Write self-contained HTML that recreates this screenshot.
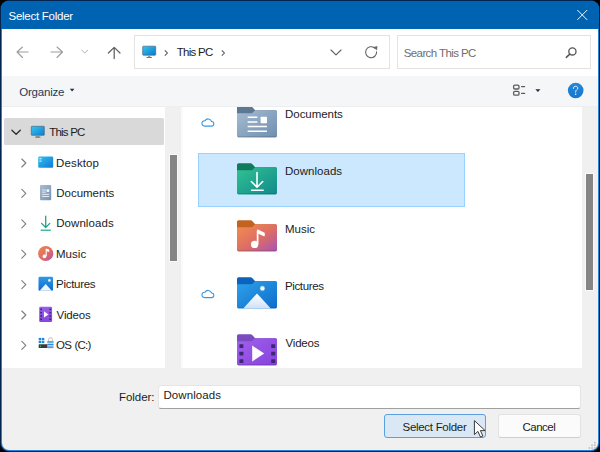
<!DOCTYPE html>
<html><head><meta charset="utf-8">
<style>
*{margin:0;padding:0;box-sizing:border-box}
html,body{width:600px;height:452px;overflow:hidden;background:#000}
body{font-family:"Liberation Sans",sans-serif;position:relative}
.a{position:absolute}
.t{position:absolute;white-space:nowrap;line-height:1;color:#1b1b1b}
#win{left:0;top:0;width:600px;height:452px;background:#022552;border-radius:9px}
#inner{left:1px;top:1px;width:598px;height:450px;background:#2a82d4;border-radius:8px}
#body{left:2px;top:2px;width:596px;height:448px;background:#f0f0f0;border-radius:7px;overflow:hidden}
</style></head>
<body>
<div id="win" class="a"></div>
<div id="inner" class="a"></div>
<div id="body" class="a"></div>
<!-- title bar -->
<div class="a" style="left:1px;top:1px;width:598px;height:28px;background:#0063b1;border-radius:8px 8px 0 0"></div>
<svg class="a" style="left:576px;top:9px" width="12" height="12" viewBox="0 0 12 12"><path d="M1.3 1L11.2 10.9M11.2 1L1.3 10.9" stroke="#fff" stroke-width="0.95" fill="none"/></svg>

<!-- top white nav/address area -->
<div class="a" style="left:2px;top:29px;width:596px;height:47px;background:#fff"></div>
<!-- toolbar -->
<div class="a" style="left:2px;top:76px;width:596px;height:30px;background:#f5f6f7"></div>
<div class="a" style="left:2px;top:106px;width:596px;height:1px;background:#eceef0"></div>
<!-- content white -->
<div class="a" style="left:2px;top:107px;width:596px;height:261px;background:#fff"></div>


<!-- address bar -->
<div class="a" style="left:134px;top:35px;width:256px;height:34px;border:1px solid #e3e3e3;background:#fff"></div>
<div class="a" style="left:397px;top:35px;width:194px;height:34px;border:1px solid #e3e3e3;background:#fff"></div>
<!-- nav arrows -->
<svg class="a" style="left:0;top:29px" width="600" height="47" viewBox="0 29 600 47">
 <g fill="none" stroke-linecap="round" stroke-linejoin="round">
  <path d="M17 52H28M22.5 47L17 52L22.5 57.5" stroke="#9c9c9c" stroke-width="1.1"/>
  <path d="M51 52H62.5M57 47L62.5 52L57 57.5" stroke="#9c9c9c" stroke-width="1.1"/>
  <path d="M81.8 50.2L84.8 53L87.8 50.2" stroke="#b4b4b4" stroke-width="1"/>
  <path d="M114.2 47.6V58.6M108.4 53L114.2 47.4L120 53" stroke="#5f5f5f" stroke-width="1.25"/>
  <path d="M331 50L336 54.8L341 50" stroke="#606060" stroke-width="1.1"/>
  <path d="M374.64 47.99A5.5 5.5 0 1 0 376.58 51.72" stroke="#626262" stroke-width="1.1"/>
  <path d="M377.1 46.6L376.8 49.9L373.8 47.6Z" fill="#626262" stroke="#626262" stroke-width="0.5" stroke-linejoin="round"/>
  <circle cx="572.4" cy="51.4" r="3.6" stroke="#555" stroke-width="1.3"/>
  <path d="M569.8 54.1L566.3 57.4" stroke="#555" stroke-width="1.5"/>
 </g>
</svg>
<!-- monitor icon address -->
<svg class="a" style="left:142px;top:45px" width="16" height="14" viewBox="0 0 16 14">
 <defs><linearGradient id="mon" x1="0" y1="0" x2="1" y2="1"><stop offset="0" stop-color="#35c6ec"/><stop offset="1" stop-color="#0b78cc"/></linearGradient></defs>
 <rect x="0.7" y="1.2" width="13" height="9" rx="0.6" fill="url(#mon)" stroke="#44698a" stroke-width="0.7"/>
 <rect x="6" y="10.6" width="2.4" height="1.5" fill="#9a9a9a"/>
 <rect x="4.4" y="12" width="5.6" height="1.1" rx="0.4" fill="#777"/>
</svg>
<svg class="a" style="left:160px;top:45px" width="70" height="14" viewBox="160 45 70 14">
 <path d="M164.8 50.4L167.4 53L164.8 55.6M221.8 50.4L224.4 53L221.8 55.6" fill="none" stroke="#555" stroke-width="1.05"/>
</svg>

<!-- toolbar -->
<svg class="a" style="left:0;top:76px" width="600" height="30" viewBox="0 76 600 30">
 <path d="M69.8 88.8H74.4L72.1 91.6Z" fill="#1e2a4a"/>
 <g fill="none" stroke="#5c5c5c" stroke-width="1.3" stroke-linecap="round">
  <rect x="513.6" y="85.2" width="5.4" height="3.8" rx="1.2"/>
  <rect x="513.6" y="91.4" width="5.4" height="3.8" rx="1.2"/>
  <path d="M521.6 86.6H524.6M521.6 93.4H524.6"/>
 </g>
 <path d="M535.4 89.2H540.4L537.9 92Z" fill="#1e2a4a"/>
 <defs><linearGradient id="hlp" x1="0" y1="0" x2="0" y2="1"><stop offset="0" stop-color="#2289dc"/><stop offset="1" stop-color="#1676cc"/></linearGradient></defs>
 <circle cx="575.7" cy="90.5" r="7.8" fill="url(#hlp)"/>
 <path d="M573.4 88.4C573.4 86.9 574.4 86.3 575.6 86.3C576.8 86.3 577.8 87.1 577.8 88.2C577.8 89.6 575.7 89.9 575.7 91.6V92.2" fill="none" stroke="#fff" stroke-width="0.95" stroke-linecap="round"/>
 <circle cx="575.7" cy="94.3" r="0.7" fill="#fff"/>
</svg>

<!-- nav pane -->
<div class="a" style="left:4px;top:118px;width:160px;height:27px;background:#d9d9d9;border-radius:1.5px"></div>
<div class="a" style="left:165px;top:107px;width:16px;height:261px;background:#f0f0f0"></div>
<div class="a" style="left:181px;top:107px;width:2px;height:261px;background:#fafafa"></div>
<div class="a" style="left:169px;top:154px;width:9px;height:108px;background:#fafafa"></div>
<div class="a" style="left:170px;top:155px;width:7px;height:106px;background:#858585"></div>
<!-- content scrollbar -->
<div class="a" style="left:582px;top:107px;width:16px;height:261px;background:#f0f0f0"></div>
<div class="a" style="left:585px;top:173px;width:9px;height:118px;background:#fafafa"></div>
<div class="a" style="left:586px;top:174px;width:7px;height:116px;background:#858585"></div>



<!-- nav icons -->
<svg class="a" style="left:0;top:107px" width="165" height="261" viewBox="0 107 165 261">
 <defs>
  <linearGradient id="gmon" x1="0" y1="0" x2="1" y2="1"><stop offset="0" stop-color="#3cc4f0"/><stop offset="1" stop-color="#0a7fd0"/></linearGradient>
  <linearGradient id="gdesk" x1="0" y1="0" x2="1" y2="1"><stop offset="0" stop-color="#2fc0ee"/><stop offset="1" stop-color="#1279d4"/></linearGradient>
  <linearGradient id="gdoc" x1="0" y1="0" x2="1" y2="1"><stop offset="0" stop-color="#a9bdd3"/><stop offset="1" stop-color="#7592b2"/></linearGradient>
  <linearGradient id="gmus" x1="0" y1="0" x2="1" y2="1"><stop offset="0" stop-color="#f08848"/><stop offset="0.6" stop-color="#dc6a6a"/><stop offset="1" stop-color="#b04fb0"/></linearGradient>
  <linearGradient id="gpic" x1="0" y1="0" x2="0" y2="1"><stop offset="0" stop-color="#2f9ae6"/><stop offset="1" stop-color="#0d6ccc"/></linearGradient>
  <linearGradient id="gvid" x1="0" y1="0" x2="0" y2="1"><stop offset="0" stop-color="#9a5ee8"/><stop offset="1" stop-color="#8646dc"/></linearGradient>
 </defs>
 <path d="M11.9 130.2L16.1 134.3L20.3 130.2" fill="none" stroke="#2b2b2b" stroke-width="1.3" stroke-linejoin="round" stroke-linecap="round"/>
 <g fill="none" stroke="#7c7c7c" stroke-width="1.1" stroke-linecap="round" stroke-linejoin="round">
  <path d="M21.8 159L25.8 163L21.8 167"/>
  <path d="M21.8 189.4L25.8 193.4L21.8 197.4"/>
  <path d="M21.8 219.8L25.8 223.8L21.8 227.8"/>
  <path d="M21.8 250.2L25.8 254.2L21.8 258.2"/>
  <path d="M21.8 280.6L25.8 284.6L21.8 288.6"/>
  <path d="M21.8 311L25.8 315L21.8 319"/>
  <path d="M21.8 341.4L25.8 345.4L21.8 349.4"/>
 </g>
 <!-- monitor -->
 <rect x="31.3" y="126.3" width="13" height="9" rx="0.6" fill="url(#gmon)" stroke="#44698a" stroke-width="0.7"/>
 <rect x="36.6" y="135.7" width="2.4" height="1.4" fill="#9a9a9a"/>
 <rect x="35" y="136.6" width="5.6" height="1.1" rx="0.4" fill="#777"/>
 <!-- desktop -->
 <rect x="38.2" y="156.6" width="15" height="11.2" rx="1.2" fill="url(#gdesk)"/>
 <rect x="39.4" y="158.2" width="2.2" height="1.1" fill="#d8f2ff"/>
 <rect x="39.4" y="160.6" width="2.2" height="1.1" fill="#d8f2ff"/>
 <!-- documents -->
 <rect x="40" y="185" width="11.2" height="15.2" rx="1" fill="url(#gdoc)"/>
 <g fill="#f4f7fb"><rect x="42.2" y="189.6" width="3.6" height="0.85"/><rect x="42.2" y="191.7" width="3.6" height="0.85"/><rect x="46.6" y="189.3" width="2.6" height="2.6"/><rect x="42.2" y="193.9" width="7" height="0.85"/><rect x="42.2" y="196" width="7" height="0.85"/></g>
 <!-- downloads -->
 <path d="M45.7 216.2V227.4M41.6 223.4L45.7 227.5L49.8 223.4" fill="none" stroke="#1fa58a" stroke-width="1.3" stroke-linecap="round" stroke-linejoin="round"/>
 <rect x="40.6" y="229.6" width="10.2" height="1.2" fill="#1fa58a"/>
 <!-- music -->
 <circle cx="45.7" cy="253.5" r="7.6" fill="url(#gmus)"/>
 <path d="M46.2 249.2V256.2" stroke="#fff" stroke-width="1.1"/>
 <path d="M45.8 248.4L49.2 249.5V252L46.2 251Z" fill="#fff"/>
 <circle cx="44.4" cy="256.4" r="1.8" fill="#fff"/>
 <!-- pictures -->
 <rect x="38.5" y="276.7" width="14.5" height="14.1" rx="1.3" fill="url(#gpic)"/>
 <path d="M39.6 290.8L45.7 284L51.8 290.8Z" fill="#eef6ff"/>
 <circle cx="49.4" cy="280.4" r="1.3" fill="#eaf5ff"/>
 <!-- videos -->
 <rect x="39.2" y="306.7" width="12.9" height="15.3" rx="1.2" fill="url(#gvid)"/>
 <g fill="#3a2470"><rect x="40.3" y="308.6" width="1.7" height="1.5"/><rect x="40.3" y="311.9" width="1.7" height="1.5"/><rect x="40.3" y="315.2" width="1.7" height="1.5"/><rect x="40.3" y="318.5" width="1.7" height="1.5"/>
 <rect x="49.4" y="308.6" width="1.7" height="1.5"/><rect x="49.4" y="311.9" width="1.7" height="1.5"/><rect x="49.4" y="315.2" width="1.7" height="1.5"/><rect x="49.4" y="318.5" width="1.7" height="1.5"/></g>
 <path d="M44 311.3L48.4 314.4L44 317.5Z" fill="#fff"/>
 <!-- OS drive -->
 <g fill="#1c86e0"><rect x="38.7" y="337.9" width="2.5" height="2.3"/><rect x="41.8" y="337.9" width="2.5" height="2.3"/><rect x="38.7" y="340.8" width="2.5" height="2.3"/><rect x="41.8" y="340.8" width="2.5" height="2.3"/></g>
 <rect x="38.7" y="344.2" width="9.6" height="3.8" rx="0.5" fill="#3a3a3a"/>
 <rect x="40" y="345.5" width="1" height="1.2" fill="#2bd07a"/>
 <path d="M48.6 341.2V339.6A1.9 1.9 0 0 1 52.4 339.6V341.2" fill="none" stroke="#b9b9b9" stroke-width="0.9"/>
 <rect x="47.3" y="341" width="6.2" height="7.4" rx="0.8" fill="#d8dde2"/>
 <rect x="47.3" y="341.3" width="6.2" height="1.3" fill="#2b8ee0"/>
 <rect x="47.3" y="343.9" width="6.2" height="1.3" fill="#2b8ee0"/>
 <rect x="47.3" y="346.5" width="6.2" height="1.3" fill="#2b8ee0"/>
</svg>


<!-- content pane -->
<div class="a" style="left:198px;top:153px;width:267px;height:54px;background:#cce8ff;border:1px solid #99d1ff"></div>
<svg class="a" style="left:182px;top:107px" width="400" height="261" viewBox="182 107 400 261">
 <g fill="none" stroke="#3b97de" stroke-width="1.05">
  <path d="M204.3 126.1H211.4A2.3 2.3 0 0 0 211.6 121.5A3.6 3.6 0 0 0 205 120.7A2.7 2.7 0 0 0 204.3 126.1Z"/>
  <path d="M204.3 297.6H211.4A2.3 2.3 0 0 0 211.6 293A3.6 3.6 0 0 0 205 292.2A2.7 2.7 0 0 0 204.3 297.6Z"/>
 </g>
 <g transform="translate(237 106.2)">
  <defs><linearGradient id="fdoc" x1="0" y1="0" x2="1" y2="1"><stop offset="0" stop-color="#a6bbd1"/><stop offset="1" stop-color="#6f8fb0"/></linearGradient></defs>
  <path d="M0 1.6Q0 0 1.6 0H13.6Q14.4 0 15 0.6L18.2 4H38.4Q40 4 40 5.6V12H0Z" fill="#5c7893"/>
  <path d="M0 7H14.6Q15.2 7 15.6 6.6L18.2 4H38.4Q40 4 40 5.6V29.6Q40 31.2 38.4 31.2H1.6Q0 31.2 0 29.6Z" fill="url(#fdoc)"/>
  <path d="M0.6 30.4H39.4" stroke="#000" stroke-opacity="0.12" stroke-width="1"/>
  <g fill="#fff"><rect x="10.6" y="10.4" width="9.8" height="1.4" rx="0.3"/><rect x="10.6" y="15.1" width="9.8" height="1.4" rx="0.3"/><rect x="23.6" y="10.5" width="6.4" height="6.5" rx="0.6"/><rect x="10.6" y="19.6" width="19.4" height="1.4" rx="0.3"/><rect x="10.6" y="24.4" width="19.4" height="1.4" rx="0.3"/></g>
 </g>
 <g transform="translate(237 163.2)">
  <defs><linearGradient id="fdown" x1="0" y1="0" x2="1" y2="1"><stop offset="0" stop-color="#31c492"/><stop offset="1" stop-color="#12888c"/></linearGradient></defs>
  <path d="M0 1.6Q0 0 1.6 0H13.6Q14.4 0 15 0.6L18.2 4H38.4Q40 4 40 5.6V12H0Z" fill="#0f7a5c"/>
  <path d="M0 7H14.6Q15.2 7 15.6 6.6L18.2 4H38.4Q40 4 40 5.6V29.6Q40 31.2 38.4 31.2H1.6Q0 31.2 0 29.6Z" fill="url(#fdown)"/>
  <path d="M0.6 30.4H39.4" stroke="#000" stroke-opacity="0.12" stroke-width="1"/>
  <path d="M20 9.3V23.6M14.3 18.3L20 24L25.7 18.3" fill="none" stroke="#fff" stroke-width="1.6" stroke-linecap="round" stroke-linejoin="round"/><rect x="13.9" y="26.2" width="12.9" height="1.6" rx="0.4" fill="#fff"/>
 </g>
 <g transform="translate(237 220.2)">
  <defs><linearGradient id="fmus" x1="0" y1="0" x2="1" y2="1"><stop offset="0" stop-color="#f58d4c"/><stop offset="0.55" stop-color="#dc6d66"/><stop offset="1" stop-color="#a853b4"/></linearGradient></defs>
  <path d="M0 1.6Q0 0 1.6 0H13.6Q14.4 0 15 0.6L18.2 4H38.4Q40 4 40 5.6V12H0Z" fill="#c2631f"/>
  <path d="M0 7H14.6Q15.2 7 15.6 6.6L18.2 4H38.4Q40 4 40 5.6V29.6Q40 31.2 38.4 31.2H1.6Q0 31.2 0 29.6Z" fill="url(#fmus)"/>
  <path d="M0.6 30.4H39.4" stroke="#000" stroke-opacity="0.12" stroke-width="1"/>
  <path d="M20.6 24.4V10.4" stroke="#fff" stroke-width="1.7"/><path d="M20 9.6Q20.6 9.2 21.4 9.6L27.2 12.4Q27.8 12.8 27.8 13.4V15.4Q27.8 16.4 26.8 16L21.4 13.6Z" fill="#fff"/><circle cx="17.6" cy="24.2" r="3.6" fill="#fff"/>
 </g>
 <g transform="translate(237 277.2)">
  <defs><linearGradient id="fpic" x1="0" y1="0" x2="1" y2="1"><stop offset="0" stop-color="#2ea2ea"/><stop offset="1" stop-color="#0f6ccb"/></linearGradient></defs>
  <path d="M0 1.6Q0 0 1.6 0H13.6Q14.4 0 15 0.6L18.2 4H38.4Q40 4 40 5.6V12H0Z" fill="#0b63be"/>
  <path d="M0 7H14.6Q15.2 7 15.6 6.6L18.2 4H38.4Q40 4 40 5.6V29.6Q40 31.2 38.4 31.2H1.6Q0 31.2 0 29.6Z" fill="url(#fpic)"/>
  <path d="M0.6 30.4H39.4" stroke="#000" stroke-opacity="0.12" stroke-width="1"/>
  <defs><linearGradient id="gmt" x1="0" y1="0" x2="0" y2="1"><stop offset="0" stop-color="#ffffff"/><stop offset="1" stop-color="#cfe2f6"/></linearGradient></defs><path d="M6.2 31.2L20 16.2L33.8 31.2Z" fill="url(#gmt)"/><circle cx="25.4" cy="11.2" r="2.3" fill="#fff" stroke="#7cc0f0" stroke-width="0.6"/>
 </g>
 <g transform="translate(237 334.2)">
  <defs><linearGradient id="fvid" x1="0" y1="0" x2="1" y2="1"><stop offset="0" stop-color="#a160ec"/><stop offset="1" stop-color="#8643dc"/></linearGradient></defs>
  <path d="M0 1.6Q0 0 1.6 0H13.6Q14.4 0 15 0.6L18.2 4H38.4Q40 4 40 5.6V12H0Z" fill="#7a4cc0"/>
  <path d="M0 7H14.6Q15.2 7 15.6 6.6L18.2 4H38.4Q40 4 40 5.6V29.6Q40 31.2 38.4 31.2H1.6Q0 31.2 0 29.6Z" fill="url(#fvid)"/>
  <path d="M0.6 30.4H39.4" stroke="#000" stroke-opacity="0.12" stroke-width="1"/>
  <g fill="#3d2775"><rect x="2.4" y="10" width="4" height="3.8" rx="0.5"/><rect x="2.4" y="17.6" width="4" height="3.8" rx="0.5"/><rect x="2.4" y="25" width="4" height="3.8" rx="0.5"/><rect x="34.2" y="10" width="4" height="3.8" rx="0.5"/><rect x="34.2" y="17.6" width="4" height="3.8" rx="0.5"/><rect x="34.2" y="25" width="4" height="3.8" rx="0.5"/></g><path d="M15.2 11.4L27.2 19.4L15.2 27.2Z" fill="#fff"/>
 </g>
</svg>


<!-- bottom panel -->
<div class="a" style="left:158px;top:385px;width:423px;height:24px;background:#fff;border:1px solid #e5e5e5;border-bottom-color:#a0a0a0;border-radius:3px"></div>
<div class="a" style="left:384px;top:414px;width:102px;height:24px;background:#dae8f5;border:1px solid #5aa0e0;border-radius:3px"></div>
<div class="a" style="left:498px;top:414px;width:83px;height:24px;background:#fbfbfb;border:1px solid #e3e3e3;border-bottom-color:#cfcfcf;border-radius:3px"></div>
<svg class="a" style="left:585px;top:438px" width="14" height="13" viewBox="585 438 14 13">
 <g fill="#bdbdbd"><rect x="594" y="441.8" width="1.6" height="1.6"/><rect x="591.3" y="444.5" width="1.6" height="1.6"/><rect x="594" y="444.5" width="1.6" height="1.6"/><rect x="588.6" y="447.2" width="1.6" height="1.6"/><rect x="591.3" y="447.2" width="1.6" height="1.6"/><rect x="594" y="447.2" width="1.6" height="1.6"/></g>
</svg>

<!--TEXTS-->
<div class="t" id="title" style="left:8.50px;top:11px;font-size:11.5px;letter-spacing:-0.26px;color:#fff">Select Folder</div>
<div class="t" id="addr" style="left:176.80px;top:47px;font-size:11.5px;letter-spacing:-0.75px;color:#1c1c1c">This PC</div>
<div class="t" id="search" style="left:403.70px;top:48px;font-size:11.5px;letter-spacing:-0.59px;color:#6e6e6e">Search This PC</div>
<div class="t" id="org" style="left:19.20px;top:87px;font-size:11.5px;letter-spacing:-0.20px;color:#1e395b">Organize</div>
<div class="t" id="nThisPC" style="left:49.30px;top:127px;font-size:11.5px;letter-spacing:-0.80px;color:#1c1c1c">This PC</div>
<div class="t" id="nDesktop" style="left:56.10px;top:158px;font-size:11.5px;letter-spacing:0.12px;color:#1c1c1c">Desktop</div>
<div class="t" id="nDocuments" style="left:56.20px;top:188px;font-size:11.5px;letter-spacing:-0.00px;color:#1c1c1c">Documents</div>
<div class="t" id="nDownloads" style="left:56.20px;top:218px;font-size:11.5px;letter-spacing:0.07px;color:#1c1c1c">Downloads</div>
<div class="t" id="nMusic" style="left:56.00px;top:249px;font-size:11.5px;letter-spacing:0.03px;color:#1c1c1c">Music</div>
<div class="t" id="nPictures" style="left:56.00px;top:279px;font-size:11.5px;letter-spacing:-0.28px;color:#1c1c1c">Pictures</div>
<div class="t" id="nVideos" style="left:56.60px;top:310px;font-size:11.5px;letter-spacing:-0.14px;color:#1c1c1c">Videos</div>
<div class="t" id="nOS" style="left:56.10px;top:340px;font-size:11.5px;letter-spacing:-0.8px;word-spacing:1px;color:#1c1c1c">OS (C:)</div>
<div class="t" id="cDocuments" style="left:285.10px;top:109px;font-size:11.5px;letter-spacing:-0.06px;color:#1c1c1c">Documents</div>
<div class="t" id="cDownloads" style="left:284.90px;top:166px;font-size:11.5px;letter-spacing:0.04px;color:#1c1c1c">Downloads</div>
<div class="t" id="cMusic" style="left:284.90px;top:224px;font-size:11.5px;letter-spacing:0.03px;color:#1c1c1c">Music</div>
<div class="t" id="cPictures" style="left:284.90px;top:281px;font-size:11.5px;letter-spacing:-0.34px;color:#1c1c1c">Pictures</div>
<div class="t" id="cVideos" style="left:285.50px;top:338px;font-size:11.5px;letter-spacing:-0.18px;color:#1c1c1c">Videos</div>
<div class="t" id="folder" style="left:118.90px;top:392px;font-size:11.5px;letter-spacing:-0.02px;color:#1c1c1c">Folder:</div>
<div class="t" id="input" style="left:163.40px;top:390px;font-size:11.5px;letter-spacing:0.09px;color:#1c1c1c">Downloads</div>
<div class="t" id="btn" style="left:402.50px;top:422px;font-size:11.5px;letter-spacing:-0.29px;color:#1c1c1c">Select Folder</div>
<div class="t" id="cancel" style="left:522.50px;top:422px;font-size:11.5px;letter-spacing:-0.51px;color:#1c1c1c">Cancel</div>
<!--/TEXTS-->

<svg class="a" style="left:468px;top:415px" width="24" height="26" viewBox="468 415 24 26">
 <path d="M474.4 420.6V434.6L477.9 431.4L480.5 437.1L482.9 436L480.4 430.6H485.1Z" fill="#fff" stroke="#2e2e2e" stroke-width="0.95" stroke-linejoin="miter"/>
</svg>

</body></html>
